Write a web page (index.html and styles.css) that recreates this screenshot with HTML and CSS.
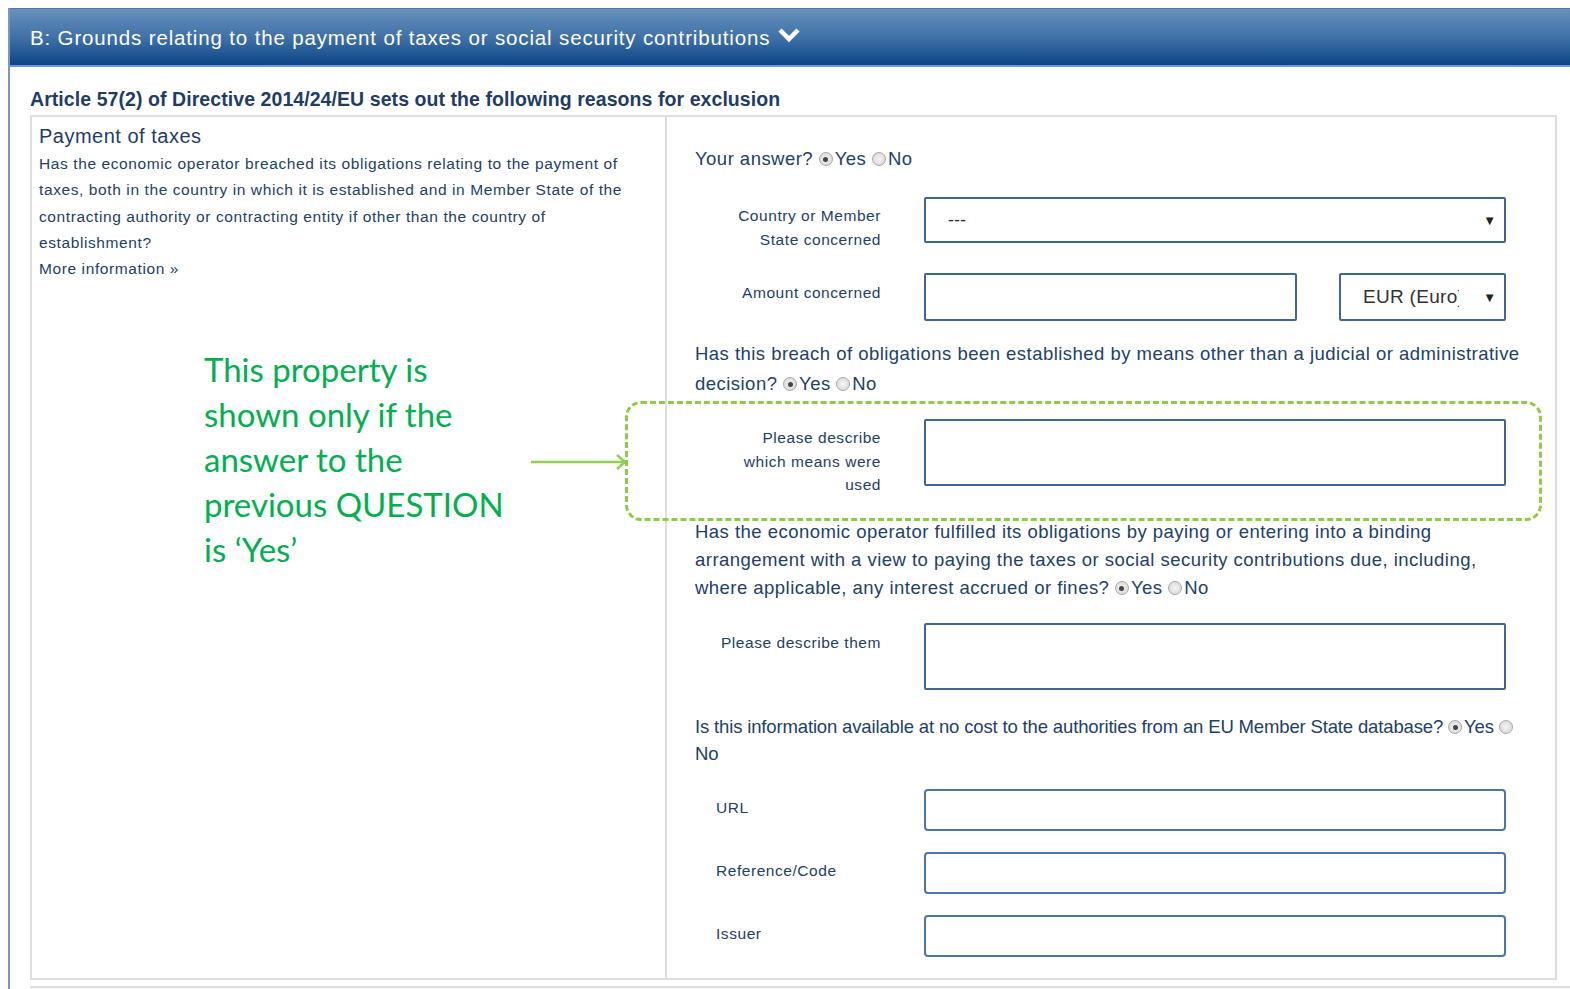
FILE: index.html
```html
<!DOCTYPE html>
<html>
<head>
<meta charset="utf-8">
<link rel="stylesheet" href="styles.css">
</head>
<body>
<div class="page">
  <div class="panel-head">
    <span>B: Grounds relating to the payment of taxes or social security contributions</span>
    <svg class="chev" width="22" height="16" viewBox="0 0 22 16"><path d="M2 3 L11 12 L20 3" fill="none" stroke="#fff" stroke-width="4.5" stroke-linejoin="miter"/></svg>
  </div>
  <div class="content">
    <h2 class="article">Article 57(2) of Directive 2014/24/EU sets out the following reasons for exclusion</h2>
    <div class="grid">
      <div class="left">
        <h3 class="crit-title">Payment of taxes</h3>
        <p class="crit-desc">Has the economic operator breached its obligations relating to the payment of taxes, both in the country in which it is established and in Member State of the contracting authority or contracting entity if other than the country of establishment?</p>
        <a class="more">More information »</a>
      </div>
      <div class="right">
        <div class="q q-first">Your answer? <span class="radio on"></span>Yes <span class="radio"></span>No</div>

        <div class="row r-country">
          <label class="lbl">Country or Member State concerned</label>
          <div class="select wide"><span>---</span><span class="arr">▼</span></div>
        </div>

        <div class="row r-amount">
          <label class="lbl lbl-mid">Amount concerned</label>
          <div class="amount-wrap">
            <div class="input amount"></div>
            <div class="select cur"><span class="cur-text">EUR (Euro)</span><span class="arr">▼</span></div>
          </div>
        </div>

        <div class="q q-breach">Has this breach of obligations been established by means other than a judicial or administrative decision? <span class="radio on"></span>Yes <span class="radio"></span>No</div>

        <div class="row r-means">
          <label class="lbl lbl-tall">Please describe which means were used</label>
          <div class="input textarea"></div>
        </div>

        <div class="q q-fulfil">Has the economic operator fulfilled its obligations by paying or entering into a binding arrangement with a view to paying the taxes or social security contributions due, including, where applicable, any interest accrued or fines? <span class="radio on"></span>Yes <span class="radio"></span>No</div>

        <div class="row r-them">
          <label class="lbl lbl-them">Please describe them</label>
          <div class="input textarea"></div>
        </div>

        <div class="q q-db">Is this information available at no cost to the authorities from an EU Member State database? <span class="radio on"></span>Yes <span class="radio"></span><br>No</div>

        <div class="row r-small r-url">
          <label class="lbl lbl-left">URL</label>
          <div class="input small"></div>
        </div>
        <div class="row r-small">
          <label class="lbl lbl-left">Reference/Code</label>
          <div class="input small"></div>
        </div>
        <div class="row r-small">
          <label class="lbl lbl-left">Issuer</label>
          <div class="input small"></div>
        </div>
      </div>
    </div>
    <div class="bottom-line"></div>
  </div>

  <div class="note">This property is shown only if the answer to the previous QUESTION is ‘Yes’</div>
  <svg class="arrow" width="100" height="20" viewBox="0 0 100 20"><path d="M0 10 H93" stroke="#92d050" stroke-width="2.5" fill="none"/><path d="M86 3 L94 10 L86 17" stroke="#92d050" stroke-width="2.5" fill="none"/></svg>
  <div class="dash-box"></div>
</div>
</body>
</html>
```

FILE: styles.css
```css
* { box-sizing: border-box; }
html, body { margin: 0; padding: 0; background: #fff; }
body {
  font-family: "Liberation Sans", Arial, sans-serif;
  color: #22406c;
  width: 1570px;
  height: 989px;
  overflow: hidden;
}
.page {
  position: relative;
  margin: 8px 0 0 8px;
  border-left: 2px solid #7a98bb;
  height: 981px;
}
.panel-head {
  height: 59px;
  background: linear-gradient(#6790bd, #3c6ea5 55%, #0b4486);
  border-top: 1px solid #4f78a6;
  border-bottom: 2px solid #6d9bd6;
  color: #fff;
  font-size: 20.5px;
  display: flex;
  align-items: center;
  padding-left: 20px;
  gap: 8px;
  letter-spacing: 0.85px;
}
.panel-head span { position: relative; top: 1px; }
.chev { position: relative; top: -2px; }
.content { padding-left: 20px; }
.article {
  margin: 0;
  font-size: 19.5px;
  font-weight: bold;
  height: 48px;
  line-height: 20px;
  padding-top: 22px;
  letter-spacing: 0.07px;
  color: #1f3c69;
}
.grid {
  display: flex;
  width: 1527px;
  height: 865px;
  border: 2px solid #dedede;
}
.left {
  width: 635px;
  border-right: 2px solid #dedede;
  padding: 6px 0 0 7px;
}
.crit-title {
  margin: 0 0 2px;
  font-size: 20px;
  font-weight: normal;
  line-height: 26px;
  color: #1f3c69;
  letter-spacing: 0.5px;
}
.crit-desc {
  margin: 0;
  font-size: 15.5px;
  line-height: 26.4px;
  width: 590px;
  letter-spacing: 0.6px;
}
.more {
  display: block;
  font-size: 15.5px;
  line-height: 26px;
  color: #22406c;
  letter-spacing: 0.6px;
  margin-top: -1px;
}
.right {
  flex: 1;
  padding: 27px 0 0 28px;
}
.q {
  font-size: 18.5px;
  line-height: 29px;
  width: 832px;
  letter-spacing: 0.47px;
}
.radio {
  display: inline-block;
  width: 14px;
  height: 14px;
  border-radius: 50%;
  border: 1px solid #a8a8a8;
  background: radial-gradient(#f4f4f4, #d4d4d4);
  vertical-align: -1px;
  margin: 0 2px 0 0;
  position: relative;
}
.radio.on::after {
  content: "";
  position: absolute;
  left: 3.5px; top: 3.5px;
  width: 5px; height: 5px;
  border-radius: 50%;
  background: #444;
}
.row {
  display: flex;
  gap: 43px;
}
.lbl {
  width: 186px;
  flex: none;
  text-align: right;
  font-size: 15.5px;
  line-height: 24px;
  letter-spacing: 0.55px;
  padding: 7px 0 0 20px;
}
.lbl-mid { padding-top: 8px; }
.lbl-tall { padding: 7px 0 0 40px; line-height: 23.5px; }
.lbl-them { padding: 8px 0 0 0; }
.lbl-left { text-align: left; padding: 7px 0 0 21px; }
.input, .select {
  border: 2px solid #3f6696;
  border-radius: 2px;
  background: #fff;
}
.select {
  display: flex;
  align-items: center;
  justify-content: space-between;
  color: #333;
  font-size: 18px;
}
.wide { width: 582px; height: 46px; padding: 0 8px 0 22px; }
.arr { font-size: 13px; color: #222; }
.amount-wrap { display: flex; gap: 42px; }
.amount { width: 373px; height: 48px; }
.cur { width: 167px; height: 48px; padding: 0 8px 0 22px; }
.cur-text { width: 96px; overflow: hidden; white-space: nowrap; color: #333; font-size: 19px; letter-spacing: 0.3px; }
.textarea { width: 582px; height: 67px; }
.small { width: 582px; height: 42px; border-color: #4a77a8; border-radius: 4px; }
.q-first { margin-bottom: 24px; }
.r-country { height: 76px; }
.r-amount { height: 66px; }
.q-breach { line-height: 30px; margin-bottom: 20px; }
.r-means { height: 99px; }
.q-fulfil { line-height: 28px; }
.r-them { margin-top: 21px; height: 90px; }
.q-db { line-height: 27px; letter-spacing: -0.15px; }
.r-url { margin-top: 22px; }
.r-small { height: 63px; }
.bottom-line {
  height: 2px;
  background: #dedede;
  margin-top: 6px;
  width: 1540px;
}
.note {
  position: absolute;
  left: 194px;
  top: 339px;
  width: 320px;
  font-family: Lato, "Open Sans", sans-serif;
  font-size: 33px;
  line-height: 45px;
  color: #00b050;
}
.arrow {
  position: absolute;
  left: 521px;
  top: 444px;
}
.dash-box {
  position: absolute;
  left: 615px;
  top: 393px;
  width: 917px;
  height: 120px;
  border: 3px dashed #8ecb47;
  border-radius: 16px;
}
```
